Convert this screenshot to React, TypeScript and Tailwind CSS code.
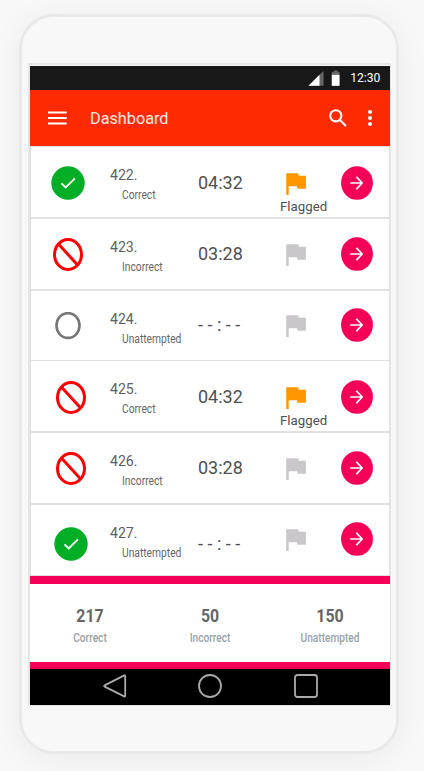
type Status = 'ok' | 'ban' | 'open';

interface Question {
  id: string;
  label: string;
  status: Status;
  time: string;
  flagged: boolean;
  row: string;
  icon: string;
  clock: string;
  flag: string;
  arrow: string;
}

const questions: Question[] = [
  { id: '422.', label: 'Correct', status: 'ok', time: '04:32', flagged: true, row: '', icon: 'pl-5 pt-[19px]', clock: 'pt-[26px]', flag: 'pt-[26px]', arrow: 'pt-[19px]' },
  { id: '423.', label: 'Incorrect', status: 'ban', time: '03:28', flagged: false, row: '', icon: 'pl-[22px] pt-[19px]', clock: 'pt-[25px]', flag: 'pt-[25px]', arrow: 'pt-[18px]' },
  { id: '424.', label: 'Unattempted', status: 'open', time: '- - : - -', flagged: false, row: '', icon: 'pl-6 pt-[21px]', clock: 'pt-6', flag: 'pt-6', arrow: 'pt-[17px]' },
  { id: '425.', label: 'Correct', status: 'ban', time: '04:32', flagged: true, row: '-mt-[2px]', icon: 'pl-[25px] pt-5', clock: 'pt-[26px]', flag: 'pt-[26px]', arrow: 'pt-[19px]' },
  { id: '426.', label: 'Incorrect', status: 'ban', time: '03:28', flagged: false, row: '', icon: 'pl-[25px] pt-[19px]', clock: 'pt-[25px]', flag: 'pt-[25px]', arrow: 'pt-[18px]' },
  { id: '427.', label: 'Unattempted', status: 'ok', time: '- - : - -', flagged: false, row: '', icon: 'pl-[23px] pt-[22px]', clock: 'pt-[29px]', flag: 'pt-6', arrow: 'pt-[17px]' },
];

const totals = [
  { value: '217', label: 'Correct' },
  { value: '50', label: 'Incorrect' },
  { value: '150', label: 'Unattempted' },
];

function StatusIcon({ status }: { status: Status }) {
  if (status === 'ok') {
    return (
      <svg width="34" height="34" viewBox="0 0 34 34">
        <circle cx="17" cy="17" r="16.7" fill="#03ae27" />
        <path d="M10.5 17.3l4.2 4.2 9.2-9.2" fill="none" stroke="#fff" strokeWidth="1.8" />
      </svg>
    );
  }
  if (status === 'ban') {
    return (
      <svg width="30" height="33" viewBox="0 0 30 33">
        <ellipse cx="15" cy="16.5" rx="13.5" ry="15" fill="none" stroke="#f00" strokeWidth="3" />
        <path d="M5.4 6l19.2 21" stroke="#f00" strokeWidth="3" />
      </svg>
    );
  }
  return (
    <svg width="26" height="28" viewBox="0 0 26 28">
      <ellipse cx="13" cy="13.5" rx="11.5" ry="12.4" fill="none" stroke="#777" strokeWidth="2.6" />
    </svg>
  );
}

function Flag({ active }: { active: boolean }) {
  return (
    <svg className="ml-1.5" width="20" height="22" viewBox="0 0 20 22">
      <path
        d="M0.2 0.2H12.2L12.8 2.7H19.9V15.8H11.5L11 13.3H2.7V22H0.2Z"
        fill={active ? '#ff9800' : '#cac7ca'}
      />
    </svg>
  );
}

function ArrowButton() {
  return (
    <button className="block">
      <svg width="32" height="34" viewBox="0 0 32 34">
        <ellipse cx="16" cy="17" rx="15.9" ry="16.8" fill="#f50057" />
        <path d="M9.2 17h12M15.4 10.9l5.7 6.1-5.7 6.1" fill="none" stroke="#fff" strokeWidth="1.7" />
      </svg>
    </button>
  );
}

function Row({ q }: { q: Question }) {
  return (
    <div className={`relative grid h-[72px] grid-cols-[79px_88px_82px_61px_1fr] border border-[#e1e1e1] bg-white ${q.row}`}>
      <div className={q.icon}>
        <StatusIcon status={q.status} />
      </div>
      <div className="pt-[18px]">
        <div className="origin-left scale-x-[0.94] text-[15px] leading-5 text-[#606060]">{q.id}</div>
        <div className="ml-3 origin-left scale-x-[0.855] text-[12px] leading-5 text-[#666]">{q.label}</div>
      </div>
      <div className={`whitespace-nowrap text-[18px] leading-5 text-[#505050] ${q.clock}`}>{q.time}</div>
      <div className={q.flag}>
        <Flag active={q.flagged} />
        {q.flagged && <div className="mt-1 origin-left scale-x-[1.02] text-[13px] leading-4 text-[#505050]">Flagged</div>}
      </div>
      <div className={q.arrow}>
        <ArrowButton />
      </div>
    </div>
  );
}

export default function App() {
  return (
    <div className="flex h-[771px] w-[424px] overflow-hidden bg-[#f8f8f8] pl-[19px] pt-3.5 font-['Roboto',sans-serif]">
      <div className="h-[740px] w-[380px] rounded-[35px] border-3 border-[#e9e9e9] bg-[#f8f8f8] pl-1.5 pt-[46px] shadow-[0_5px_32px_rgba(0,0,0,0.06)]">
        <div className="w-[363px] border-b border-l-2 border-r border-t-2 border-[#e5e5e5] pt-px">
          <header className="flex h-6 items-center justify-end bg-[#181818] pr-2.5 text-white">
            <svg width="32" height="16" viewBox="0 0 32 16">
              <path d="M15.5 1v14.8H0.5z" fill="#666" />
              <path d="M11.5 4.8v11H0.5z" fill="#fff" />
              <path d="M26 .5h3.5v1.3h2v14h-7.7v-14H26z" fill="#666" />
              <path d="M23.8 4.8h7.7v11h-7.7z" fill="#fff" />
            </svg>
            <span className="ml-2 inline-block origin-right scale-x-[0.93] text-[13px] leading-[26px]">12:30</span>
          </header>
          <div className="flex h-14 items-center bg-[#fe2a02] pl-[17.5px] text-white">
            <svg width="19" height="14" viewBox="0 0 19 14">
              <path d="M0 1.5h18.7M0 7h18.7M0 12.4h18.7" stroke="#fff" strokeWidth="2" />
            </svg>
            <h1 className="ml-[23.5px] flex-1 pt-px">
              <span className="inline-block origin-left scale-x-[0.955] text-[17px] leading-6 text-white/90">Dashboard</span>
            </h1>
            <svg width="18" height="18" viewBox="0 0 18 18" fill="none" stroke="#fff" strokeWidth="2.1">
              <circle cx="6.8" cy="6.8" r="5.6" />
              <path d="M10.9 10.9l6 6" />
            </svg>
            <svg className="ml-[21px] mr-[18px]" width="4" height="16" viewBox="0 0 4 16" fill="#fff">
              <circle cx="2" cy="2" r="2" />
              <circle cx="2" cy="8" r="2" />
              <circle cx="2" cy="14" r="2" />
            </svg>
          </div>
          <main className="h-[430px] bg-white">
            {questions.map((q) => (
              <Row key={q.id} q={q} />
            ))}
          </main>
          <section className="grid h-[93px] grid-cols-3 border-b-[7px] border-t-8 border-[#f50057] bg-white pt-[22px] text-center">
            {totals.map((t) => (
              <div key={t.label}>
                <div className="scale-x-[0.88] text-[18px] font-bold leading-5 text-[#666]">{t.value}</div>
                <div className="mt-0.5 scale-x-[0.845] text-[12px] font-medium leading-5 text-[#98a2a6]">{t.label}</div>
              </div>
            ))}
          </section>
          <nav className="flex h-9 items-center bg-black pl-[73px] pb-0.5">
            <svg width="24" height="24" viewBox="0 0 24 24" fill="none" stroke="#aaa" strokeWidth="1.8" strokeLinejoin="round">
              <path d="M21.3 1.4Q22.2 1.1 22.2 2.2V21.8Q22.2 22.8 21.2 22.4L1.6 12.6Q.8 12 1.6 11.4Z" />
            </svg>
            <svg className="ml-[71px]" width="24" height="24" viewBox="0 0 24 24" fill="none" stroke="#aaa" strokeWidth="1.8">
              <circle cx="12" cy="12" r="11" />
            </svg>
            <svg className="ml-[72px]" width="24" height="24" viewBox="0 0 24 24" fill="none" stroke="#aaa" strokeWidth="1.8">
              <rect x="1" y="1" width="22" height="22" rx="2.5" />
            </svg>
          </nav>
        </div>
      </div>
    </div>
  );
}
